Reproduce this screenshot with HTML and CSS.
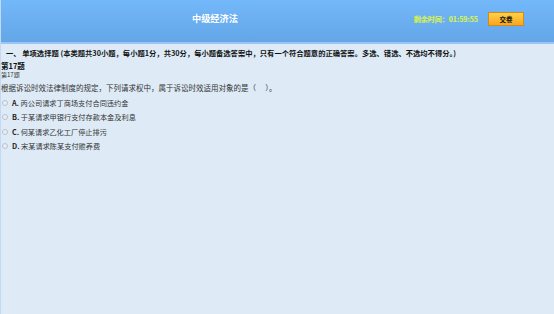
FILE: index.html
```html
<!DOCTYPE html>
<html lang="zh">
<head>
<meta charset="utf-8">
<title>中级经济法</title>
<link rel="stylesheet" href="styles.css">
</head>
<body>
<div class="page">
  <header class="top">
    <div class="title">中级经济法</div>
    <div class="right">
      <span class="timer">剩余时间：01:59:55</span>
      <button class="submit">交卷</button>
    </div>
  </header>
  <main class="content">
    <div class="section">一、 单项选择题 (本类题共30小题，每小题1分，共30分，每小题备选答案中，只有一个符合题意的正确答案。多选、错选、不选均不得分。)</div>
    <div class="qno">第17题</div>
    <div class="qno-small">第17题</div>
    <div class="question">根据诉讼时效法律制度的规定，下列请求权中，属于诉讼时效适用对象的是（ 　）。</div>
    <ul class="options">
      <li class="opt"><span class="radio"></span><b>A.</b> 丙公司请求丁商场支付合同违约金</li>
      <li class="opt"><span class="radio"></span><b>B.</b> 于某请求甲银行支付存款本金及利息</li>
      <li class="opt"><span class="radio"></span><b>C.</b> 何某请求乙化工厂停止排污</li>
      <li class="opt"><span class="radio"></span><b>D.</b> 宋某请求陈某支付赡养费</li>
    </ul>
  </main>
</div>
</body>
</html>
```

FILE: styles.css
```css
html, body {
  margin: 0;
  padding: 0;
  height: 100%;
}
body {
  font-family: "Noto Sans CJK SC", "Liberation Sans", sans-serif;
  background: #deebf7;
}
.page {
  height: 314px;
  display: flex;
  flex-direction: column;
  border-left: 1px solid #c3d8f4;
  box-sizing: border-box;
}
.top {
  height: 42px;
  flex: none;
  display: flex;
  align-items: center;
  background: linear-gradient(#73b8fa, #64a6e7);
  border-bottom: 2px solid #9cc6f1;
  padding: 0 30px 0 191px;
  box-sizing: content-box;
}
.title {
  color: #ffffff;
  font-weight: bold;
  font-size: 9.2px;
  line-height: 12px;
  margin-top: -6px;
}
.right {
  margin-left: auto;
  display: flex;
  align-items: center;
  gap: 10px;
  margin-top: -4px;
}
.timer {
  color: #d2ef55;
  font-weight: bold;
  font-size: 7px;
  line-height: 10px;
  -webkit-text-stroke: 0.2px #d2ef55;
}
.submit {
  width: 36px;
  height: 14px;
  padding: 0;
  border: 1px solid #d28a1c;
  background: linear-gradient(#ffd24a, #f8a51f);
  color: #111;
  font-family: inherit;
  font-weight: bold;
  font-size: 6.5px;
  line-height: 12px;
}
.content {
  flex: 1;
  color: #222;
}
.section {
  margin: 3px 0 2px 5px;
  font-size: 7.3px;
  line-height: 12px;
  font-weight: bold;
  color: #111;
  white-space: nowrap;
}
.qno {
  font-size: 7.5px;
  line-height: 10px;
  font-weight: bold;
  color: #111;
}
.qno-small {
  font-size: 6px;
  line-height: 7px;
  color: #333;
}
.question {
  margin-top: 4px;
  font-size: 7.5px;
  line-height: 12px;
  color: #333;
}
.options {
  list-style: none;
  margin: 1.5px 0 0 0;
  padding: 0;
}
.opt {
  display: flex;
  align-items: center;
  height: 14.5px;
  font-size: 7.2px;
  color: #333;
  white-space: pre;
}
.opt b {
  color: #222;
}
.radio {
  width: 6px;
  height: 6px;
  border-radius: 50%;
  border: 1px solid #b8c3cf;
  background: #e9eef4;
  margin: 0 4px 0 1px;
  box-sizing: border-box;
}
```
